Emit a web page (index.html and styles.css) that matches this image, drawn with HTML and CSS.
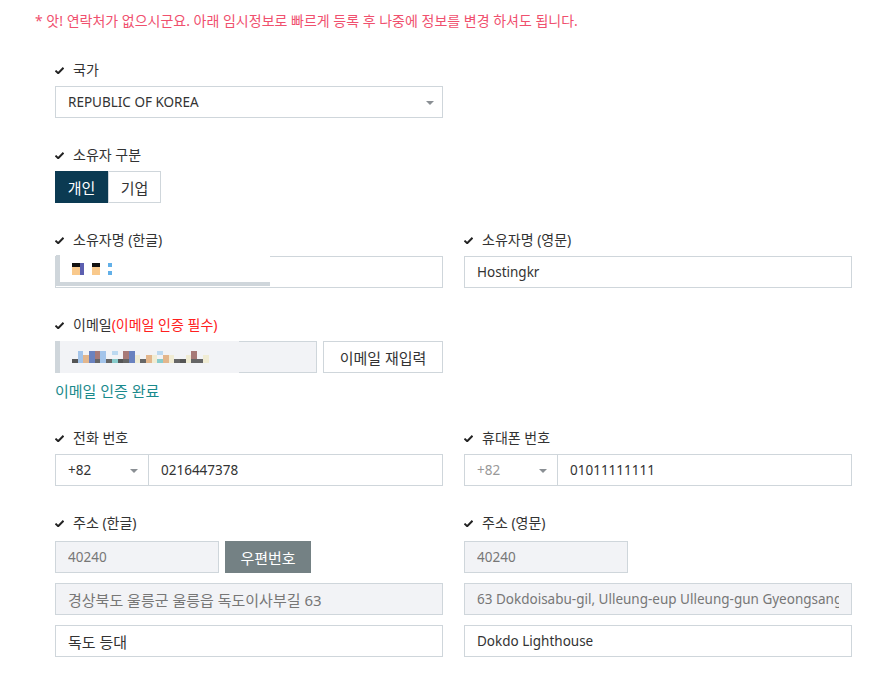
FILE: index.html
```html
<!DOCTYPE html>
<html lang="ko">

<head>
    <meta charset="UTF-8">
    <meta name="viewport" content="width=device-width, initial-scale=1.0">
    <title>연락처 등록</title>
    <link rel="stylesheet" href="styles.css">
</head>

<body>
    <!-- Notice -->
    <p class="notice">* 앗! 연락처가 없으시군요. 아래 임시정보로 빠르게 등록 후 나중에 정보를 변경 하셔도 됩니다.</p>

    <form class="contact-form">
        <!-- Country -->
        <div class="row">
            <div class="field">
                <label class="field-label"><svg class="check" viewBox="0 0 9 7"><path d="M0.5 3.6 L3.2 6.2 L8.5 0.8" /></svg>국가</label>
                <div class="select">REPUBLIC OF KOREA</div>
            </div>
        </div>

        <!-- Owner type -->
        <div class="row">
            <div class="field">
                <label class="field-label"><svg class="check" viewBox="0 0 9 7"><path d="M0.5 3.6 L3.2 6.2 L8.5 0.8" /></svg>소유자 구분</label>
                <div class="toggle">
                    <button type="button" class="toggle-btn active">개인</button>
                    <button type="button" class="toggle-btn">기업</button>
                </div>
            </div>
        </div>

        <!-- Owner name -->
        <div class="row">
            <div class="field">
                <label class="field-label"><svg class="check" viewBox="0 0 9 7"><path d="M0.5 3.6 L3.2 6.2 L8.5 0.8" /></svg>소유자명 (한글)</label>
                <div class="masked">
                    <input class="input" type="text">
                    <div class="mask mask-name">
                        <span class="px px-dark"></span><span class="px px-navy"></span><span class="px px-gap"></span><span class="px px-dark"></span><span class="px px-gap"></span><span class="px px-blue"></span>
                    </div>
                </div>
            </div>
            <div class="field">
                <label class="field-label"><svg class="check" viewBox="0 0 9 7"><path d="M0.5 3.6 L3.2 6.2 L8.5 0.8" /></svg>소유자명 (영문)</label>
                <input class="input" type="text" value="Hostingkr">
            </div>
        </div>

        <!-- Email -->
        <div class="row">
            <div class="field">
                <label class="field-label"><svg class="check" viewBox="0 0 9 7"><path d="M0.5 3.6 L3.2 6.2 L8.5 0.8" /></svg>이메일<span class="required">(이메일 인증 필수)</span></label>
                <div class="input-group">
                    <div class="masked grow">
                        <input class="input readonly" type="text" readonly>
                        <div class="mask mask-email">
                            <span class="px c1"></span><span class="px c2"></span><span class="px c3"></span><span class="px c4"></span><span class="px c5"></span><span class="px c2"></span><span class="px c6"></span><span class="px c7"></span><span class="px c1"></span><span class="px c5"></span><span class="px c4"></span><span class="px c8"></span><span class="px c6"></span><span class="px c3"></span><span class="px c8"></span><span class="px c7"></span><span class="px c3"></span><span class="px c8"></span><span class="px c6"></span><span class="px c1"></span><span class="px c8"></span><span class="px c5"></span><span class="px c6"></span><span class="px c8"></span>
                        </div>
                    </div>
                    <button type="button" class="btn btn-outline">이메일 재입력</button>
                </div>
                <a class="verified">이메일 인증 완료</a>
            </div>
        </div>

        <!-- Phone -->
        <div class="row">
            <div class="field">
                <label class="field-label"><svg class="check" viewBox="0 0 9 7"><path d="M0.5 3.6 L3.2 6.2 L8.5 0.8" /></svg>전화 번호</label>
                <div class="phone">
                    <div class="select code">+82</div>
                    <input class="input" type="text" value="0216447378">
                </div>
            </div>
            <div class="field">
                <label class="field-label"><svg class="check" viewBox="0 0 9 7"><path d="M0.5 3.6 L3.2 6.2 L8.5 0.8" /></svg>휴대폰 번호</label>
                <div class="phone">
                    <div class="select code muted">+82</div>
                    <input class="input" type="text" value="01011111111">
                </div>
            </div>
        </div>

        <!-- Address -->
        <div class="row">
            <div class="field">
                <label class="field-label"><svg class="check" viewBox="0 0 9 7"><path d="M0.5 3.6 L3.2 6.2 L8.5 0.8" /></svg>주소 (한글)</label>
                <div class="address">
                    <div class="zip-row">
                        <input class="input readonly zip" type="text" value="40240" readonly>
                        <button type="button" class="btn btn-gray">우편번호</button>
                    </div>
                    <input class="input readonly ko" type="text" value="경상북도 울릉군 울릉읍 독도이사부길 63" readonly>
                    <input class="input ko" type="text" value="독도 등대">
                </div>
            </div>
            <div class="field">
                <label class="field-label"><svg class="check" viewBox="0 0 9 7"><path d="M0.5 3.6 L3.2 6.2 L8.5 0.8" /></svg>주소 (영문)</label>
                <div class="address">
                    <div class="zip-row">
                        <input class="input readonly zip" type="text" value="40240" readonly>
                    </div>
                    <input class="input readonly" type="text" value="63 Dokdoisabu-gil, Ulleung-eup Ulleung-gun Gyeongsangbuk-do" readonly>
                    <input class="input" type="text" value="Dokdo Lighthouse">
                </div>
            </div>
        </div>
    </form>
</body>

</html>
```

FILE: styles.css
```css
body {
    margin: 0;
    padding: 0;
    font-family: "Noto Sans", "Noto Sans CJK KR", sans-serif;
    font-size: 13.5px;
    color: #333;
    background: #fff;
}

.notice {
    margin: 0;
    padding: 13px 0 0 35px;
    font-size: 14px;
    line-height: 16px;
    color: #f0506e;
}

.contact-form {
    padding: 33px 0 0 55px;
}

.row {
    display: grid;
    grid-template-columns: 388px 388px;
    column-gap: 21px;
    margin-bottom: 29px;
}

.field {
    display: flex;
    flex-direction: column;
}

.field-label {
    display: flex;
    align-items: center;
    height: 16px;
    line-height: 16px;
    margin-bottom: 8px;
    font-size: 14px;
    color: #333;
}

.check {
    width: 9px;
    height: 7px;
    margin-right: 9px;
    fill: none;
    stroke: #222;
    stroke-width: 2;
}

.required {
    color: #ff2020;
}

.input {
    box-sizing: border-box;
    height: 32px;
    width: 100%;
    padding: 0 12px;
    border: 1px solid #cfd6db;
    font-family: inherit;
    font-size: 13.5px;
    color: #333;
    background: #fff;
    outline: none;
}

.input.ko {
    font-size: 15px;
}

.input.readonly {
    background: #f2f3f6;
    color: #777;
}

.select {
    position: relative;
    box-sizing: border-box;
    height: 32px;
    line-height: 30px;
    padding: 0 12px;
    border: 1px solid #cfd6db;
    background: #fff;
}

.select::after {
    content: "";
    position: absolute;
    right: 8px;
    top: 14px;
    border-left: 4px solid transparent;
    border-right: 4px solid transparent;
    border-top: 4px solid #8a8f94;
}

.toggle {
    display: flex;
}

.toggle-btn {
    box-sizing: border-box;
    height: 32px;
    width: 53px;
    padding: 0;
    border: 1px solid #cfd6db;
    background: #fff;
    font-family: inherit;
    font-size: 15px;
    color: #333;
}

.toggle-btn.active {
    background: #0b3a52;
    border-color: #0b3a52;
    color: #fff;
}

.masked {
    position: relative;
}

.grow {
    flex: 1;
}

.mask {
    position: absolute;
    left: 1px;
    top: -1px;
    box-sizing: border-box;
    display: flex;
    align-items: center;
    border-left: 4px solid #cfd6db;
}

.mask-name {
    width: 214px;
    height: 31px;
    padding-left: 12px;
    background: #fff;
    border-bottom: 4px solid #cfd6db;
}

.mask-email {
    width: 183px;
    height: 32px;
    top: 0;
    padding-left: 12px;
    background: #f2f3f6;
}

.px {
    width: 4px;
    height: 8px;
}

.mask-name .px {
    height: 12px;
}

.mask-email .px {
    width: 5.7px;
    height: 12px;
}

.px-dark {
    width: 8px;
    background: linear-gradient(#111 0 4px, #f9c98c 4px);
}

.px-navy {
    background: #5c5fb0;
}

.px-gap {
    width: 8px;
}

.px-blue {
    background: linear-gradient(#62b0e8 0 4px, transparent 4px 8px, #62b0e8 8px);
}

.c1 { background: linear-gradient(#f2f3f6 0 8px, #555 8px); }
.c2 { background: #a3c4ea; }
.c3 { background: linear-gradient(#f2f3f6 0 4px, #e3b68c 4px); }
.c4 { background: #6a82bf; }
.c5 { background: linear-gradient(#a77a78 0 8px, #666 8px); }
.c6 { background: linear-gradient(#f2f3f6 0 8px, #666 8px); }
.c7 { background: linear-gradient(#bcd9f0 0 4px, #f2f3f6 4px 8px, #8cc 8px); }
.c8 { background: linear-gradient(#f2f3f6 0 4px, #f0ecd4 4px); }

.input-group {
    display: flex;
    gap: 6px;
}

.btn {
    box-sizing: border-box;
    height: 32px;
    padding: 0;
    font-family: inherit;
    font-size: 15px;
}

.btn-outline {
    width: 120px;
    border: 1px solid #cfd6db;
    background: #fff;
    color: #333;
}

.btn-gray {
    width: 86px;
    border: none;
    background: #748184;
    color: #fff;
}

.verified {
    margin-top: 9px;
    font-size: 15px;
    line-height: 19px;
    color: #1a8a8c;
}

.phone {
    display: flex;
}

.phone .code {
    flex: 0 0 93px;
    border-right: none;
}

.phone .select::after {
    right: 10px;
}

.muted {
    color: #999;
}

.address {
    display: flex;
    flex-direction: column;
    gap: 10px;
    margin-top: 2px;
}

.zip-row {
    display: flex;
    gap: 6px;
}

.zip {
    width: 164px;
}
```
